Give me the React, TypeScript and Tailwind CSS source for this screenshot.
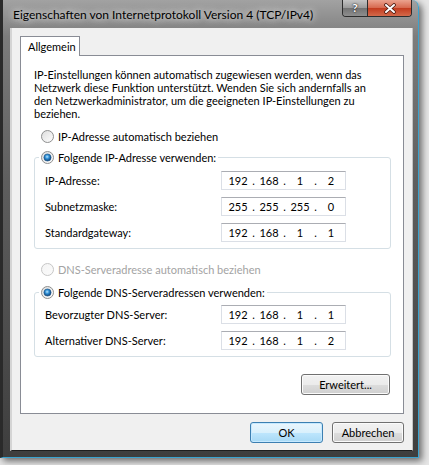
import { Fragment } from 'react'

const UI_FONT = "font-['Lato',sans-serif]"

function Radio({ id, checked, disabled }: { id: string; checked?: boolean; disabled?: boolean }) {
  return (
    <svg width="13" height="13" viewBox="0 0 13 13" className="shrink-0">
      <defs>
        <linearGradient id={`bg-${id}`} x1="0" y1="0" x2="1" y2="1">
          <stop offset="0" stopColor={disabled ? '#f4f4f4' : '#dcdcdc'} />
          <stop offset="1" stopColor={disabled ? '#fbfbfb' : '#ffffff'} />
        </linearGradient>
        <radialGradient id={`dot-${id}`} cx="0.45" cy="0.4" r="0.6">
          <stop offset="0" stopColor="#b8e6ff" />
          <stop offset="0.45" stopColor="#2f8fd6" />
          <stop offset="1" stopColor="#0d3c6e" />
        </radialGradient>
      </defs>
      <circle cx="6.5" cy="6.5" r="6" fill={`url(#bg-${id})`} stroke={disabled ? '#c6c6c6' : '#8e8f8f'} />
      {checked && <circle cx="6.5" cy="6.5" r="3.6" fill={`url(#dot-${id})`} stroke="#1d5689" strokeWidth="0.6" />}
    </svg>
  )
}

function IpBox({ parts }: { parts: string[] }) {
  return (
    <div className="flex h-[19px] w-[125px] items-center border border-[#dbdfe6] border-t-[#abadb3] bg-white pl-[2px] leading-none">
      {parts.map((p, i) => (
        <Fragment key={i}>
          <span className="w-[28px] text-center">{p}</span>
          {i < 3 && <span className="w-[3px] text-center">.</span>}
        </Fragment>
      ))}
    </div>
  )
}

function Row({ label, parts }: { label: string; parts: string[] }) {
  return (
    <div className="flex h-[19px] items-center">
      <span className="w-[176px]">{label}</span>
      <IpBox parts={parts} />
    </div>
  )
}

function VistaButton({ label, width, primary }: { label: string; width: string; primary?: boolean }) {
  return (
    <button
      className={
        primary
          ? `${width} h-[21px] rounded-[3px] border border-[#3c7fb1] bg-[linear-gradient(#eaf6fd,#d9f0fc_50%,#bee6fd_50%,#a7d9f5)] shadow-[inset_0_0_0_1px_#c6e9ff] text-black`
          : `${width} h-[21px] rounded-[3px] border border-[#707070] bg-[linear-gradient(#f2f2f2,#ebebeb_50%,#dddddd_50%,#cfcfcf)] shadow-[inset_0_0_0_1px_#fbfbfb] text-black`
      }
    >
      {label}
    </button>
  )
}

export default function App() {
  return (
    <div className={`h-[465px] w-[429px] overflow-hidden bg-[#e6e6e6] text-[11px] leading-[13px] text-black ${UI_FONT}`}>
      <div className="flex h-[458px] w-[419px] flex-col rounded-tr-[7px] border-l-[3px] border-r border-b border-l-[#2a2a2a] border-r-[#3aa3cf] border-b-[#3aa3cf] bg-[linear-gradient(#a2a2a2,#7c7c7c_8%,#5e5e5e_40%,#3e3e3e)] shadow-[3px_3px_7px_rgba(0,0,0,0.55)]">
        {/* title bar */}
        <div className="flex h-[28px] shrink-0 items-start justify-between pl-[10px] pr-[6px]">
          <span className="whitespace-nowrap pt-[6px] text-[12px] leading-[18px] text-black [text-shadow:0_0_6px_#e8e8e8,0_0_10px_#d8d8d8]">
            Eigenschaften von Internetprotokoll Version 4 (TCP/IPv4)
          </span>
          <div className="flex h-[17px] shrink-0 overflow-hidden rounded-b-[4px] border border-t-0 border-[#2c2c2c]">
            <div className="flex w-[25px] items-center justify-center border-r border-[#2c2c2c] bg-[linear-gradient(#c4c4c4,#9a9a9a_50%,#727272_50%,#8e8e8e)] text-[12px] font-bold leading-none text-white [text-shadow:0_0_1px_#222,0_0_2px_#222]">
              ?
            </div>
            <div className="flex w-[43px] items-center justify-center bg-[linear-gradient(#eba38f,#d6674d_50%,#c23a1d_50%,#d4694a)]">
              <svg width="14" height="11" viewBox="0 0 14 11">
                <path d="M3 2 L11 9 M11 2 L3 9" stroke="#4a1a10" strokeWidth="3.6" strokeLinecap="round" />
                <path d="M3 2 L11 9 M11 2 L3 9" stroke="#ffffff" strokeWidth="2" strokeLinecap="round" />
              </svg>
            </div>
          </div>
        </div>

        {/* body */}
        <div className="flex flex-1 pl-[7px] pr-[5px] pb-[6px]">
          <div className="flex flex-1 flex-col border-l-2 border-r border-b border-l-[#d4d4d4] border-r-[#c4c4c4] border-b-[#1e1e1e] bg-[#f0f0f0] pt-[8px] pl-[8px] pr-[8px] pb-[7px]">
            {/* tab */}
            <div className="relative z-10 -mb-px flex h-[20px] w-[60px] items-center border border-b-0 border-[#898c95] bg-white pl-[7px]">
              Allgemein
            </div>
            {/* panel */}
            <div className="flex flex-1 flex-col border border-[#898c95] bg-white pt-[12px] pl-[13px] pr-[12px]">
              <p className="whitespace-nowrap">
                IP-Einstellungen können automatisch zugewiesen werden, wenn das
                <br />
                Netzwerk diese Funktion unterstützt. Wenden Sie sich andernfalls an
                <br />
                den Netzwerkadministrator, um die geeigneten IP-Einstellungen zu
                <br />
                beziehen.
              </p>

              <div className="mt-[8px] flex h-[16px] items-center gap-[4px] pl-[7px]">
                <Radio id="r1" />
                <span>IP-Adresse automatisch beziehen</span>
              </div>

              <div className="mt-[13px] flex flex-col gap-[7px] rounded-[3px] border border-[#d5dfe5] pl-[10px] pr-[43px] pb-[6px]">
                <div className="-mt-[9px] -ml-[6px] mb-[-1px] flex h-[16px] w-fit items-center gap-[4px] bg-white px-[2px]">
                  <Radio id="r2" checked />
                  <span>Folgende IP-Adresse verwenden:</span>
                </div>
                <Row label="IP-Adresse:" parts={['192', '168', '1', '2']} />
                <Row label="Subnetzmaske:" parts={['255', '255', '255', '0']} />
                <Row label="Standardgateway:" parts={['192', '168', '1', '1']} />
              </div>

              <div className="mt-[12px] flex h-[16px] items-center gap-[4px] pl-[7px] text-[#a3a3a3]">
                <Radio id="r3" disabled />
                <span>DNS-Serveradresse automatisch beziehen</span>
              </div>

              <div className="mt-[15px] flex flex-col gap-[7px] rounded-[3px] border border-[#d5dfe5] pl-[10px] pr-[43px] pb-[6px]">
                <div className="-mt-[9px] -ml-[6px] mb-[-2px] flex h-[16px] w-fit items-center gap-[4px] bg-white px-[2px]">
                  <Radio id="r4" checked />
                  <span>Folgende DNS-Serveradressen verwenden:</span>
                </div>
                <Row label="Bevorzugter DNS-Server:" parts={['192', '168', '1', '1']} />
                <Row label="Alternativer DNS-Server:" parts={['192', '168', '1', '2']} />
              </div>

              <div className="mt-[17px] flex justify-end pr-[1px]">
                <VistaButton label="Erweitert..." width="w-[89px]" />
              </div>
            </div>

            <div className="mt-[8px] flex justify-end gap-[9px]">
              <VistaButton label="OK" width="w-[73px]" primary />
              <VistaButton label="Abbrechen" width="w-[72px]" />
            </div>
          </div>
        </div>
      </div>
    </div>
  )
}
